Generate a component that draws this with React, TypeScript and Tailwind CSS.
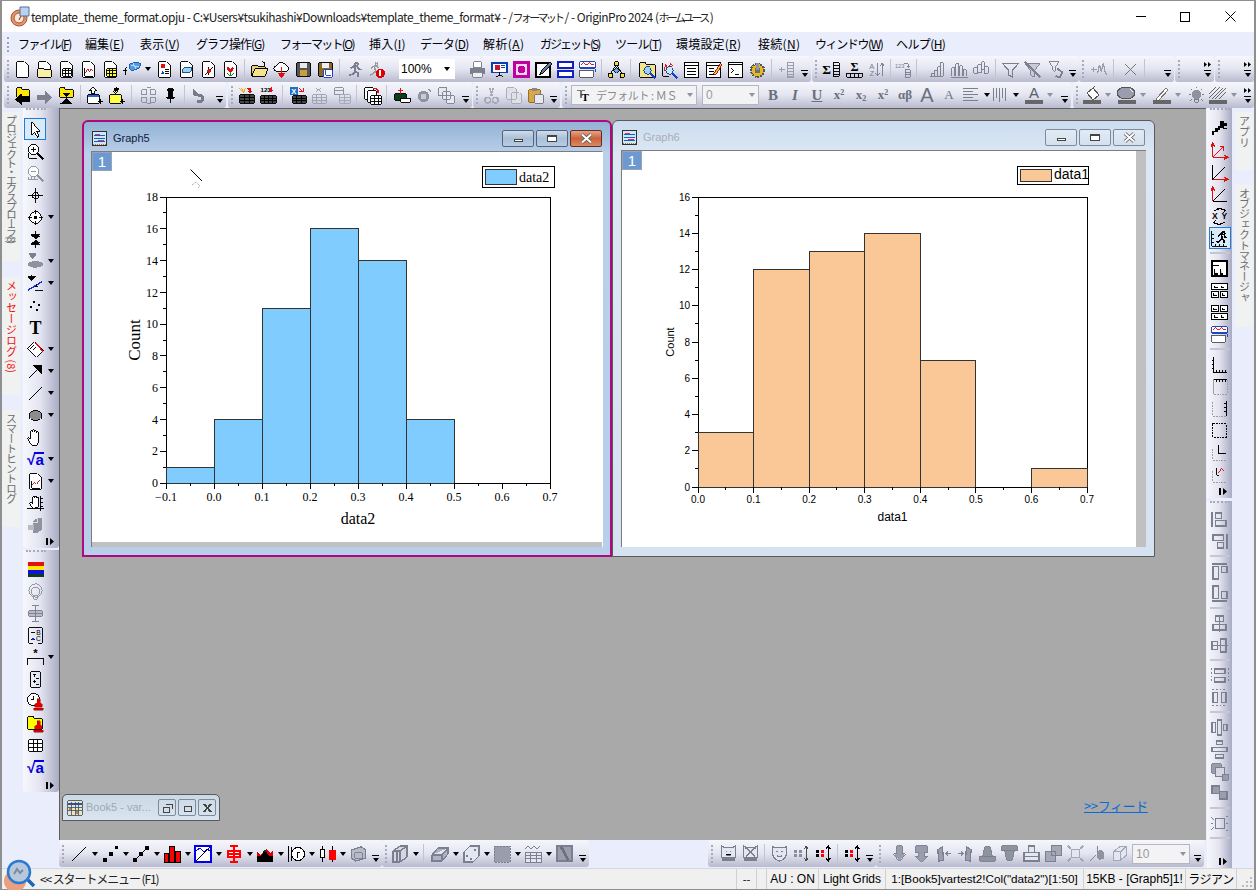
import { ReactNode } from 'react';

// 20x20 toolbar glyphs, drawn by hand from the reference
const k = '#000';
const g = '#7b7f90';
const sheet = (fill = '#fff', s = k) => <path d="M4 2h8l4 4v12H4z" fill={fill} stroke={s} />;

const icons: Record<string, ReactNode> = {
  doc: sheet(),
  wkbk: <>{sheet()}<path d="M6 9h9v8H6zM6 11.500h9M6 14h9M9 9v8M12 9v8" fill="none" stroke={k} /></>,
  book: <><path d="M1 1h18v18H1z" fill="#e8e4c8" stroke="#444" /><path d="M1 5h18" stroke="#3050a0" strokeWidth="2" /><path d="M1 9h18M1 13h18M6 3v16M10 3v16M14 3v16" stroke="#305070" /><path d="M2 10h3v3H2zM11 14h3v4h-3z" fill="#e07030" /></>,
  folderDoc: <>{sheet()}<path d="M3 9h6l1 1h7v8H3z" fill="#f9f0a8" stroke={k} /></>,
  graphDoc: <>{sheet()}<path d="M6 8v9h9" fill="none" stroke={k} /><path d="M7 14l2-5 2 4 2-4 2 3" fill="none" stroke="#d01010" /></>,
  yellowGrid: <>{sheet()}<path d="M6 9h10v8H6zM6 11.500h10M6 14h10M9 9v8M12.500 9v8" fill="#ffff30" stroke={k} /></>,
  plot3d: <><path d="M8 5l7-2 4 2-2 4-7 3-3-3z" fill="#4f9be8" stroke="#2060b0" /><path d="M9 6l8 2M11 4l3 6" stroke="#bcd8f8" /><path d="M5 8C3 8 4 12 3 16M1 11h4" fill="none" stroke={k} /></>,
  layoutDoc: <>{sheet()}<rect x="6" y="4" width="4" height="4" fill="#e01010" /><path d="M6 15l2-4 2 4z" fill="#1040d0" /><path d="M11 10h4M11 12h4M11 14h4" stroke={k} /></>,
  noteDoc: <>{sheet()}<path d="M5 13l2-5h9l-2 5z" fill="#9cd0f0" stroke="#105080" /></>,
  xyDoc: <>{sheet()}<path d="M6 16l9-9M10 7v9" stroke={k} /><circle cx="10.500" cy="11.500" r="2" fill="#e01010" /></>,
  tulipDoc: <>{sheet()}<path d="M7 7c1 1 2 1 3 2 1-1 2-1 3-2 1 3 0 5-3 6-3-1-4-3-3-6z" fill="#e01010" /><path d="M10 13v3M7 14c1 2 2 2 3 2s2 0 3-2" fill="none" stroke="#108030" /></>,
  openFolder: <><path d="M2 6h6l1 1h7v2H5l-3 8z" fill="#e8d070" stroke={k} /><path d="M5 9h14l-3 8H2z" fill="#f4e48c" stroke={k} /><path d="M13 2l3 1-1 3" fill="none" stroke={k} /></>,
  cloud: <><path d="M5 12a3 3 0 0 1 0-6 5 5 0 0 1 9-1 4 4 0 0 1 2 7z" fill="#fff" stroke={k} /><path d="M10 7v8" stroke="#e01010" strokeWidth="2" /><path d="M6 14h8l-4 5z" fill="#e01010" /></>,
  save: <><path d="M3 3h14v14H3z" fill="#555" stroke={k} /><path d="M6 3h8v5H6z" fill="#e8e8e8" /><path d="M6 11h8v6H6z" fill="#c9a040" /></>,
  saveGraph: <><path d="M3 3h14v14H3z" fill="#8a6a20" stroke={k} /><path d="M6 3h8v5H6z" fill="#eee" /><path d="M8 10h9v8H8z" fill="#fff" stroke="#2040d0" /><path d="M10 11v5h6" fill="none" stroke="#2040d0" /></>,
  runner: <path d="M12 3a1.500 1.500 0 1 0 .1 0M6 9l4-3 3 1 2 3h3M10 7l1 5-3 3-4 1M11 12l3 2 0 4" fill="none" stroke={g} strokeWidth="2" />,
  runnerStop: <><path d="M10 3a1.300 1.300 0 1 0 .1 0M4 9l4-3 3 1 1 2M8 7l1 5-3 3-3 1M9 12l2 3" fill="none" stroke="#9a9a9a" strokeWidth="1.500" /><circle cx="14" cy="14" r="5" fill="#e00000" /><path d="M13 11h2v6h-2z" fill="#fff" /></>,
  printer: <><path d="M6 2h8v6H6z" fill="#fff" stroke={g} /><path d="M2 8h16v7H2z" fill={g} /><path d="M5 13h10v5H5z" fill="#eee" stroke={g} /></>,
  present: <><path d="M2 3h16v10H2z" fill="#fff" stroke="#0840b0" strokeWidth="1.500" /><circle cx="8" cy="8" r="3" fill="#d01030" /><path d="M12 6h4M12 8h4" stroke="#0840b0" /><path d="M10 13v4M6 18l4-2 4 2" stroke={k} fill="none" /></>,
  magentaBox: <><path d="M1 1h18v18H1z" fill="#c000a0" /><path d="M4 4h12v12H4z" fill="#f4d8f0" /><circle cx="10" cy="10" r="4" fill="#c000a0" /></>,
  pen: <><path d="M2 3h15v15H2z" fill="#fff" stroke={k} strokeWidth="1.500" /><path d="M6 16l2-5 9-9 2 2-9 9z" fill="#5f7a9a" stroke={k} /></>,
  bars: <path d="M2 2h16v6H2zM2 12h16v6H2z" fill="#fff" stroke="#1020c0" strokeWidth="2" />,
  redWave: <><path d="M2 2h16v6H2z" fill="#fff" stroke="#1040c0" /><path d="M3 5l3-2 3 2 3-2 3 2 2-1" fill="none" stroke="#e01010" /><path d="M2 11h14v7H2z" fill="#fff" stroke="#555" /><path d="M2 9h16v4" fill="none" stroke="#1040c0" /></>,
  tree: <><path d="M10 5L4 14M10 5l6 9" stroke={k} /><path d="M8 2h4v4H8zM2 14h4v4H2zM14 14h4v4h-4z" fill="#f4e040" stroke={k} /><path d="M10 8l3 3-3 3-3-3z" fill="#60a8e8" stroke={k} /></>,
  findFolder: <><path d="M2 3h6l1 2h9v13H2z" fill="#f4e48c" stroke={k} /><circle cx="10" cy="11" r="4" fill="#9fd0f8" stroke="#104080" /><path d="M13 14l5 5" stroke="#1040d0" strokeWidth="2" /></>,
  findGraph: <><path d="M3 3v14h6" fill="none" stroke={k} /><path d="M4 12l2-8 2 6 3-6 3 3" fill="none" stroke="#e01010" /><circle cx="10" cy="11" r="4" fill="#cfe6fa" stroke="#104080" /><path d="M13 14l5 5" stroke="#1040d0" strokeWidth="2" /></>,
  table: <path d="M3 3h14v15H3zM3 3h14v3H3zM5 9h10M5 12h10M5 15h10" fill="#fff" stroke={k} strokeWidth="1.200" />,
  noteEdit: <><path d="M3 3h14v15H3zM3 3h14v3H3zM5 9h6M5 12h6M5 15h6" fill="#fff" stroke={k} strokeWidth="1.200" /><path d="M10 15L17 4l2 1-7 11z" fill="#f0c040" stroke="#a01010" /></>,
  cmd: <><path d="M3 3h14v15H3zM3 3h14v2H3z" fill="#fff" stroke={k} strokeWidth="1.200" /><path d="M5 8l3 3-3 3M9 15h5" fill="none" stroke={k} /></>,
  gear: <><circle cx="10" cy="11" r="7" fill="#e8b820" stroke="#555" strokeDasharray="2 1" strokeWidth="2" /><circle cx="10" cy="11" r="3" fill="#68707c" /><path d="M8 3h4v7H8z" fill="#9098a8" /></>,
  addCol: <path d="M2 10h6M5 7v6M11 3h6v15h-6zM11 6h6M11 9h6M11 12h6M11 15h6" fill="none" stroke="#9a9eac" strokeWidth="1.300" />,
  sigmaList: <><text x="6" y="15" fontSize="14" fontWeight="700" textAnchor="middle" fontFamily="Liberation Serif">Σ</text><path d="M13 3h6v14h-6zM13 6h6M13 9h6M13 12h6M13 15h6" fill="none" stroke={k} /></>,
  sigmaGrid: <><text x="10" y="12" fontSize="13" fontWeight="700" textAnchor="middle" fontFamily="Liberation Serif">Σ</text><path d="M2 14h16v4H2zM6 14v4M10 14v4M14 14v4" fill="none" stroke={k} /></>,
  sortAZ: <><text x="5" y="9" fontSize="8" fill={g} textAnchor="middle" fontFamily="Liberation Sans">A</text><text x="5" y="17" fontSize="8" fill={g} textAnchor="middle" fontFamily="Liberation Sans">Z</text><path d="M11 3v14M9 14l2 3 2-3M16 17V3M14 6l2-3 2 3" fill="none" stroke={g} /></>,
  num123: <><text x="7" y="8" fontSize="6" fill={g} textAnchor="middle" fontFamily="Liberation Sans">123</text><path d="M13 10h5v8h-5zM13 13h5M13 15.500h5M12 4h4v3M14.500 6l1.500 2 1.500-2" fill="none" stroke={g} /></>,
  stair: <path d="M2 17h2v-3h3v3h0v-6h3v6h0V7h3v10h0V3h3v14H2z" fill="none" stroke={g} />,
  column: <path d="M2 17V8h3v9M6 17V4h3v13M10 17V6h3v11M14 17v-7h3v7M1 18h18" fill="none" stroke={g} />,
  wave: <path d="M2 8h4v6H2zM6 5h4v8H6zM10 2h3v8h-3zM13 7h4v7h-4z" fill="none" stroke={g} />,
  filter: <path d="M2 4h16l-6 7v7l-4-2v-5z" fill="none" stroke={g} strokeWidth="1.300" />,
  filterX: <><path d="M2 4h16l-6 7v7l-4-2v-5z" fill="#c8cad6" stroke={g} /><path d="M2 2l16 16" stroke={g} strokeWidth="2.500" /></>,
  filterUp: <><path d="M4 2h11l-4 5v5l-3-1V7z" fill="none" stroke={g} /><path d="M13 9l5 4-2 5-5-1" fill="none" stroke={g} strokeWidth="2" /></>,
  peak: <path d="M1 10h6M4 7v6M8 14l2-9 2 7 2-9 2 10 2 2" fill="none" stroke="#9a9eac" strokeWidth="1.300" />,
  cross: <path d="M4 4l12 12M16 4L4 16" stroke="#777" strokeWidth="1.400" />,
  folderBack: <><path d="M4 2h5l1 2h7v8H4z" fill="#ffe800" stroke={k} /><path d="M2 14l7-6v3h9v6H9v3z" fill={k} /></>,
  fwd: <path d="M2 9h9V5l7 7-7 7v-4H2z" fill="#7f8190" />,
  folderDown: <><path d="M3 2h5l1 2h8v8H3z" fill="#ffe800" stroke={k} /><path d="M5 7h10l-5 5zM3 19l7-6 7 6z" fill={k} /></>,
  winAdd: <><path d="M7 1l4 4H9v3H6V5H3zM2 9h12v9H2z" fill="#fff" stroke={k} /><path d="M2 9h12v3H2z" fill="#3060e0" /><path d="M15 14v5M12.500 16.500h5" stroke={k} strokeWidth="1.500" /></>,
  folderAdd: <><path d="M9 1l2 3-3 4-2-2zM2 9h12v9H2z" fill="#ffff40" stroke={k} /><path d="M6 2h6l-4 5z" fill={k} /><path d="M15 14v5M12.500 16.500h5" stroke={k} strokeWidth="1.500" /></>,
  sync: <path d="M3 4h5v5H3zM12 4h5v5h-5zM3 12h5v5H3zM12 12h5v5h-5zM8 2h5M8 18h5" fill="none" stroke="#8a8e9c" />,
  pin: <path d="M7 3h6v2l-1 1v6h2v1H6v-1h2V6L7 5zM10 13v5" fill={k} stroke={k} />,
  undo: <path d="M3 9V3l6 5H6c5 0 9 1 9 5s-3 5-6 5h-2v-3h2c2 0 3-.5 3-2s-2-2-4-2H5z" fill="#777a88" />,
  wand: <><path d="M2 2l5 5M5 2l2 5M9 2l-2 5" stroke="#f0b000" /><path d="M11 2h5v3h2l-3 3-3-3h2" fill="#e01010" transform="translate(-1 0)" /><path d="M3 9h15v9H3zM3 12h15M3 15h15M8 9v9M13 9v9" fill="#444" stroke={k} /></>,
  num123red: <><text x="7" y="6" fontSize="6.500" fontWeight="700" textAnchor="middle" fontFamily="Liberation Sans">123</text><path d="M14 1v3h2l-3 3-3-3h2V2" fill="#e01010" /><path d="M2 10h16v8H2zM2 13h16M2 15.500h16M6 10v8M10 10v8M14 10v8" fill="#444" stroke={k} /></>,
  excel: <><path d="M2 1h8v8H2z" fill="#2070c0" /><text x="6" y="8" fontSize="8" fontWeight="700" fill="#fff" textAnchor="middle" fontFamily="Liberation Sans">X</text><path d="M12 3l4 3M16 2v4h-4" fill="none" stroke="#e01010" /><path d="M5 10h14v8H5zM5 13h14M5 15.500h14M9 10v8M14 10v8" fill="#444" stroke={k} /></>,
  gridDim: <><path d="M6 2l3 2-3 2M12 2l-3 2 3 2" fill="none" stroke="#9ea2b0" /><path d="M3 9h14v9H3zM3 12h14M3 15h14M7 9v9M12 9v9" fill="none" stroke="#9ea2b0" /></>,
  gridDim2: <><path d="M2 2h9v7H2zM2 5h9" fill="none" stroke="#8a8e9c" /><path d="M7 9h11v9H7zM7 12h11M7 15h11M12 9v9" fill="none" stroke="#a4a8b6" /></>,
  pages: <><path d="M2 2h9v12H2z" fill="#fff" stroke={k} /><path d="M5 5h9v12H5z" fill="#fff" stroke={k} /><path d="M8 10h11v9H8zM8 13h11M8 16h11M12 10v9M16 10v9" fill="#fff" stroke={k} /><path d="M11 3c3-1 5 1 5 4" fill="none" stroke="#e01010" strokeWidth="1.500" /></>,
  dataIn: <><path d="M2 8h12v7H2z" fill="#0a3c1e" stroke={k} /><path d="M8 2v6M5 5h6" stroke="#e01010" strokeWidth="1.500" /><path d="M8 13h10v4H8z" fill="#fff" stroke={k} /></>,
  round: <><circle cx="9" cy="11" r="6" fill="#8f93a0" /><circle cx="9" cy="11" r="3" fill="#c8cad6" /><path d="M14 3l3 3" stroke="#8f93a0" strokeWidth="2" /></>,
  copies: <path d="M2 2h8v8H2zM6 6h8v8H6zM10 10h8v8h-8z" fill="#e8e9f0" stroke="#7f8392" />,
  scissors: <><path d="M8 2l3 9M12 2l-3 9" stroke="#aaaab4" strokeWidth="1.500" /><circle cx="6" cy="15" r="3" fill="none" stroke="#aaaab4" strokeWidth="1.500" /><circle cx="14" cy="15" r="3" fill="none" stroke="#aaaab4" strokeWidth="1.500" /></>,
  copy: <path d="M3 2h8l2 2v10H3zM8 7h8l2 2v9H8z" fill="#dfe0e8" stroke="#aaaab4" />,
  paste: <><path d="M3 4h12v13H3z" fill="#d8a848" stroke="#8a6a20" /><path d="M6 2h6v3H6z" fill="#888" /><path d="M9 9h9v9H9z" fill="#e8e8f0" stroke="#777" /></>,
  ttFont: <><path d="M2 4h10M7 4v9" fill="none" stroke="#777" strokeWidth="2" /><text x="12" y="17" fontSize="13" fontWeight="700" textAnchor="middle" fontFamily="Liberation Serif">T</text></>,
  alignLeft: <path d="M2 3h15M2 6h10M2 9h15M2 12h10M2 15h15" stroke={g} />,
  colBars: <path d="M3 3v13M6 3v10M9 3v14M12 3v10M15 3v13" stroke={g} />,
  fontColor: <><text x="10" y="13" fontSize="15" fill="#5a5d6a" textAnchor="middle" fontFamily="Liberation Sans">A</text><path d="M1 15h18v4H1z" fill="#666" /></>,
  bucket: <><path d="M5 8l6-5 6 7-6 5z" fill="#fff" stroke="#555" /><path d="M11 3l2-2" stroke="#555" /><path d="M1 15h18v4H1z" fill="#666" /></>,
  palette: <><ellipse cx="9" cy="8" rx="9" ry="6" fill="#9a9eac" stroke="#555" /><path d="M13 4l3 3" stroke="#fff" /><path d="M1 15h18v4H1z" fill="#666" /></>,
  pencilLine: <><path d="M5 13L14 3l2 2-9 10H4z" fill="#fff" stroke="#777" /><path d="M1 15h18v4H1z" fill="#666" /></>,
  bulb: <><circle cx="10" cy="9" r="5" fill="#8f93a0" /><path d="M8 14h4v3H8zM10 1v1M2 9h2M16 9h2M4 3l1 1M16 3l-1 1M3 16l2-2M17 16l-2-2" stroke="#777" fill="none" /></>,
  hatch: <><path d="M1 13L12 2M4 14L15 3M7 14L18 3M1 9l7-7M11 14l7-7" stroke="#666" /><path d="M1 15h18v4H1z" fill="#666" /></>,
  arrowSel: <path d="M6 2v14l3-3 3 5 2-1-3-5h4z" fill="#fff" stroke={k} />,
  zoomIn: <><circle cx="8" cy="8" r="5.500" fill="#fff" stroke={k} /><path d="M5 8h6M8 5v6" stroke={k} /><path d="M12 12l6 6" stroke={k} strokeWidth="2.500" /><path d="M3 12v5h9" fill="none" stroke={k} /></>,
  zoomOut: <><circle cx="8" cy="8" r="5.500" fill="#fff" stroke="#8f93a0" /><path d="M5 8h6" stroke="#8f93a0" /><path d="M12 12l6 6" stroke="#8f93a0" strokeWidth="2.500" /><path d="M2 16h11M3 14v2M6 14v2M9 14v2" fill="none" stroke="#8f93a0" /></>,
  crosshair: <><circle cx="10" cy="10" r="3" fill="none" stroke={k} /><path d="M10 2v16M2 10h16" stroke={k} /></>,
  target: <><circle cx="10" cy="10" r="6" fill="#fff" stroke={k} /><circle cx="10" cy="10" r="1.500" fill={k} /><path d="M10 2v4M10 14v4M2 10h4M14 10h4" stroke={k} /></>,
  pickY: <path d="M5 5h10l-5 4zM10 1v4M5 15h10l-5-4zM10 19v-4" fill={k} stroke={k} />,
  peakPick: <><path d="M3 2h8L7 7zM7 1v4" fill={g} stroke={g} /><ellipse cx="10" cy="13" rx="8" ry="3.500" fill="#8f93a0" /></>,
  fitPick: <><path d="M2 3h8L6 7zM6 1v4" fill={k} stroke={k} /><path d="M2 17L17 8" stroke="#1030d0" strokeWidth="1.500" /><path d="M11 11v3M9 13h4M9 17h9" stroke={k} /></>,
  dots: <path d="M7 5h2v2H7zM13 8h2v2h-2zM4 11h2v2H4zM11 14h2v2h-2zM10 9h1v1h-1z" fill={k} />,
  textT: <text x="10" y="17" fontSize="19" fontWeight="700" textAnchor="middle" fontFamily="Liberation Serif">T</text>,
  rotText: <><path d="M2 9l7-7 9 9-7 7z" fill="#fff" stroke={k} /><path d="M5 9l4-4M7 11l4-4" stroke={k} /><path d="M10 3l8 9" stroke="#e01010" strokeWidth="1.500" /></>,
  arrowLine: <path d="M3 17L14 6M9 4h7v7z" fill={k} stroke={k} strokeWidth="1.300" />,
  line: <path d="M3 17L17 3" stroke={k} strokeWidth="1.300" />,
  ellipse: <ellipse cx="10" cy="10" rx="6.500" ry="5.500" fill="#8c8c8c" stroke={k} />,
  hand: <path d="M6 18c-2-3-4-6-4-7s2-1 3 1V4c0-2 2-2 2 0V3c0-2 2-2 2 0v1c0-2 2-2 2 0v1c0-2 2-1 2 0v9l-1 4z" fill="#fff" stroke={k} />,
  sqrt: <><text x="10" y="16" fontSize="16" fontWeight="700" fill="#0000e0" textAnchor="middle" fontFamily="Liberation Sans">√a</text><path d="M8 3h11" stroke="#0000e0" strokeWidth="2" /></>,
  chartDoc: <>{sheet()}<path d="M6 9v8h9" fill="none" stroke={k} /><path d="M6 14l3-3 2 2 4-5" fill="none" stroke="#e01010" /></>,
  handAxis: <><path d="M8 15c-2-2-4-4-4-5s2-1 3 0V4c0-2 2-2 2 0V3c0-1 2-1 2 0v1c0-1 2-1 2 0v10z" fill="#fff" stroke={k} /><path d="M1 15h18M15 2v16M15 5h3M15 9h3M15 13h3" stroke={k} /></>,
  box3d: <><path d="M7 6l5-4h5v12l-5 4H7z" fill="#8f93a0" /><path d="M2 9h6v6H2z" fill="#b8bac8" /><path d="M12 2v5H7" fill="none" stroke="#ddd" /></>,
  circles: <><circle cx="10" cy="9" r="7" fill="none" stroke="#8f93a0" /><circle cx="10" cy="10" r="4.500" fill="none" stroke="#8f93a0" /><path d="M8 14v4h4v-4" fill="none" stroke="#8f93a0" /></>,
  boxPlot: <path d="M10 2v16M6 2h8M6 18h8M3 7h14v6H3zM3 10h14" fill="#b8bac8" stroke="#7b7f90" />,
  bcLegend: <><path d="M3 2v16M17 2v16M3 2h14M3 18h4M13 18h4" fill="none" stroke={k} /><text x="13" y="9" fontSize="7" textAnchor="middle" fontFamily="Liberation Sans">B</text><text x="13" y="16" fontSize="7" textAnchor="middle" fontFamily="Liberation Sans">C</text><path d="M5 7h4M5 14h4" stroke={k} /><circle cx="7" cy="14" r="1.200" fill="#1030d0" /></>,
  asterisk: <><text x="10" y="9" fontSize="12" fontWeight="700" textAnchor="middle" fontFamily="Liberation Sans">*</text><path d="M2 18v-7h16v7" fill="none" stroke={k} /></>,
  ruler: <path d="M5 2h10v16H5zM7 5h3M8.500 4v3M11 9h3M7 12h3M8.500 11v3M11 15h3" fill="none" stroke={k} />,
  clockStamp: <><circle cx="8" cy="8" r="6.500" fill="#fff" stroke={k} /><path d="M8 4v4h-3" fill="none" stroke={k} /><path d="M12 7h3v4l2 2v3H9v-3l3-2zM8 17h10v2H8z" fill="#e00000" stroke="#800" strokeWidth=".5" /></>,
  folderStamp: <><path d="M2 3h6l1 2h8v11H2z" fill="#ffff00" stroke={k} /><path d="M12 7h3v4l2 2v3H9v-3l3-2zM8 17h10v2H8z" fill="#e00000" stroke="#800" strokeWidth=".5" /></>,
  plainGrid: <path d="M3 4h14v12H3zM3 8h14M3 12h14M7.500 4v12M12.500 4v12" fill="#fff" stroke={k} />,
  checker: <path d="M11 2h4v2h3v3h-3v2h3v2h-4V9h-3v3h-3v2H4v3H2v-4h3V9h3V7h3z" fill={k} />,
  xyzRed: <><path d="M3 17V3M1 6l2-4 2 4M3 17h15M15 15l4 2-4 2" fill="none" stroke="#e01010" strokeWidth="1.300" /><path d="M3 17L14 6M10 6h4v4" fill="none" stroke="#e01010" strokeWidth="1.300" /></>,
  xyRed: <><path d="M3 2v15L16 4" fill="none" stroke={k} strokeWidth="1.300" /><path d="M3 17h15M15 15l4 2-4 2" fill="none" stroke="#e01010" strokeWidth="1.300" /></>,
  yxRed: <><path d="M3 17h15M3 17L16 4" fill="none" stroke={k} strokeWidth="1.300" /><path d="M3 17V3M1 6l2-4 2 4" fill="none" stroke="#e01010" strokeWidth="1.300" /></>,
  swapXY: <><path d="M5 4c3-3 8-3 11 0M15 16c-3 3-8 3-11 0M14 2l2 2-2 2M6 18l-2-2 2-2" fill="none" stroke={k} strokeWidth="1.300" /><text x="5" y="13" fontSize="9" fontWeight="700" textAnchor="middle" fontFamily="Liberation Sans">X</text><text x="15" y="13" fontSize="9" fontWeight="700" textAnchor="middle" fontFamily="Liberation Sans">Y</text></>,
  runAxis: <><path d="M2 2v16h16M2 6h2M2 10h2M2 14h2M6 16v2M10 16v2M14 16v2" fill="none" stroke={k} /><path d="M14 3a1.500 1.500 0 1 0 .1 0M8 8l4-3 3 1 1 3h2M12 6l1 4-3 3-3 1M13 10l2 2v3" fill="none" stroke={k} strokeWidth="1.700" /></>,
  layerBig: <path d="M2 2h16v16H2zM2 7h7M5 11v5h3M11 11v5h3" fill="#fff" stroke={k} strokeWidth="1.500" />,
  layerTop: <path d="M2 3h16v6H2zM2 11h7v6H2zM11 11h7v6h-7zM5 5v2h3M12 5v2h3M4 13v2h3M13 13v2h3" fill="#fff" stroke={k} strokeWidth="1.200" />,
  layerBot: <path d="M2 11h16v6H2zM2 3h7v6H2zM11 3h7v6h-7zM5 13v2h3M12 13v2h3M4 5v2h3M13 5v2h3" fill="#fff" stroke={k} strokeWidth="1.200" />,
  axisB: <path d="M4 2v16h14M4 18v-2M7 18v-2M10 18v-2M13 18v-2M16 18v-2M2 6h2M2 10h2M2 14h2" fill="none" stroke={k} strokeWidth="1.200" />,
  axisT: <><path d="M4 18V2" fill="none" stroke="#9a9a9a" /><path d="M4 3h14M7 3v2M10 3v2M13 3v2M16 3v2" stroke={k} strokeWidth="1.200" /><path d="M4 18h14M18 3v15" fill="none" stroke="#9a9a9a" strokeDasharray="2 1" /></>,
  axisR: <><path d="M3 3v15h14" fill="none" stroke="#9a9a9a" strokeDasharray="2 1" /><path d="M17 2v16M15 5h2M15 9h2M15 13h2" stroke={k} strokeWidth="1.200" /></>,
  axisBox: <path d="M3 3h14v14H3z" fill="none" stroke={k} strokeDasharray="2 1" strokeWidth="1.200" />,
  axisBreak: <><path d="M9 2v9h8" fill="none" stroke={k} strokeWidth="1.200" /><path d="M3 6v12h14" fill="none" stroke="#9a9a9a" strokeDasharray="2 1" /></>,
  axisRed: <><path d="M3 6v12h14" fill="none" stroke="#9a9a9a" strokeDasharray="2 1" /><path d="M7 3v8h2" fill="none" stroke={k} /><path d="M9 8l3-4 3 3" fill="none" stroke="#e01010" /></>,
  alnL: <path d="M2 2v16M6 3h6v6H6zM6 11h11v6H6z" fill="none" stroke={g} strokeWidth="1.500" />,
  alnR: <path d="M18 2v16M3 3h11v6H3zM8 11h6v6H8z" fill="none" stroke={g} strokeWidth="1.500" />,
  alnT: <path d="M2 2h16M3 5h6v13H3zM12 5h6v6h-6z" fill="none" stroke={g} strokeWidth="1.500" />,
  alnB: <path d="M2 18h16M3 2h6v13H3zM12 8h6v7h-6z" fill="none" stroke={g} strokeWidth="1.500" />,
  ctrH: <path d="M6 2h8v6H6zM3 11h14v6H3zM10 1v18" fill="none" stroke={g} strokeWidth="1.500" />,
  ctrV: <path d="M2 6h6v8H2zM11 3h6v14h-6zM1 10h18" fill="none" stroke={g} strokeWidth="1.500" />,
  sameW: <><path d="M5 3h11v5H5zM5 12h11v5H5z" fill="none" stroke={g} strokeWidth="1.500" /><path d="M2 2v16M19 2v16" stroke={g} strokeDasharray="2 2" /></>,
  sameH: <><path d="M3 5h5v10H3zM12 5h5v10h-5z" fill="none" stroke={g} strokeWidth="1.500" /><path d="M2 2h16M2 18h16" stroke={g} strokeDasharray="2 2" /></>,
  dist: <path d="M2 5h4v10H2zM8 2h4v16H8zM14 7h4v6h-4z" fill="none" stroke={g} strokeWidth="1.500" />,
  distV: <path d="M7 1h6v4H7zM2 8h16v4H2zM6 15h8v4H6z" fill="none" stroke={g} strokeWidth="1.500" />,
  overlap: <><path d="M2 2h10v10H2z" fill="#9a9eac" stroke={g} /><path d="M6 6h9v9H6z" fill="#d4d6e2" stroke={g} strokeWidth="1.500" /><path d="M13 13h6v6h-6z" fill="#9a9eac" stroke={g} /></>,
  overlap2: <path d="M2 2h8v8H2zM10 8h8v8h-8z" fill="#9a9eac" stroke={g} strokeWidth="1.500" />,
  selBox: <><path d="M6 5h9v10H6z" fill="none" stroke={g} strokeWidth="1.500" /><path d="M1 3l3 3M1 10h2M1 17l3-3M17 3h2M17 10h2M17 17h2" stroke={g} /></>,
  lineB: <path d="M3 17L17 3" stroke={k} />,
  scatter: <path d="M3 14h4v4H3zM9 8h4v4H9zM15 2h3v3h-3z" fill={k} />,
  lineSym: <><path d="M3 17L17 3" stroke={k} strokeWidth="1.300" /><path d="M2 14h4v4H2zM8 8h4v4H8zM14 2h4v4h-4z" fill={k} /></>,
  redCols: <path d="M2 9h4v9H2zM7 2h5v16H7zM13 7h5v11h-5z" fill="#ff0000" stroke={k} />,
  bluePlot: <><path d="M2 2h16v16H2z" fill="#fff" stroke="#0000f0" strokeWidth="1.500" /><path d="M3 7l4-3 4 4 3-3 3 2" fill="none" stroke="#0000f0" /><path d="M3 17L17 3" stroke={k} /></>,
  redBox: <path d="M10 2v16M6 2h8M6 18h8M4 7h12v6H4zM4 10h12" fill="#fff" stroke="#ff0000" strokeWidth="1.300" />,
  area: <><path d="M2 8l4 3 5-6 4 4 3-2v11H2z" fill="#e00000" /><path d="M2 12l4 0 4-6 4 6 4 0v6H2z" fill={k} /><path d="M8 8l2-3 2 3z" fill="#0a3c1e" /></>,
  polarR: <><path d="M2 2v16M5 3v14" stroke={k} /><circle cx="12" cy="10" r="6.500" fill="#fff" stroke={k} /><path d="M11 14V8h3" fill="none" stroke={k} /></>,
  candle: <><path d="M5 2v16M15 2v16" stroke={k} /><path d="M3 5h4v8H3z" fill="#fff" stroke={k} /><path d="M12 6h6v9h-6z" fill="#ff0000" stroke="#ff0000" /></>,
  cubeDim: <><path d="M3 6l10-3 4 3v9l-10 3-4-3z" fill="#b8bac8" stroke="#7b7f90" strokeWidth="1.300" /><path d="M6 9h8v6H6z" fill="none" stroke="#7b7f90" /></>,
  wall3d: <path d="M3 7l7-5h7v11l-7 5H3zM3 7h7v11M10 7l7-5M7 7v11" fill="#d4d6e2" stroke="#7b7f90" strokeWidth="1.200" />,
  block3d: <path d="M2 11l6-7h10v6l-6 7H2zM2 11h10l6-7M12 11v6" fill="#b0b3c4" stroke="#7b7f90" strokeWidth="1.200" />,
  dice: <><path d="M3 8l6-6h9v10l-6 6H3z" fill="#e4e6f0" stroke="#7b7f90" strokeWidth="1.200" /><path d="M5 11h2v2H5zM9 14h2v2H9zM13 5h2v2h-2z" fill="#7b7f90" /></>,
  dotted: <path d="M2 2h16v16H2z" fill="#9a9eac" stroke="#7b7f90" strokeDasharray="2 1" />,
  waveGrid: <><path d="M2 5l3-3 3 3 3-3 3 3 3-3" fill="none" stroke="#7b7f90" /><path d="M2 8h16v10H2zM2 11h16M2 14.500h16M7 8v10M13 8v10" fill="#e4e6f0" stroke="#7b7f90" /></>,
  imgBox: <><path d="M2 2h16v16H2z" fill="#9a9eac" stroke="#7b7f90" strokeWidth="1.500" /><path d="M6 3c4 4 4 8 8 14" stroke="#6e7280" strokeWidth="3" fill="none" /></>,
  mask: <><path d="M3 2l3 2h8l3-2v12H3z" fill="#e4e6f0" stroke="#7b7f90" strokeWidth="1.200" /><path d="M7 8h1M12 8h1M7 11c2 2 4 2 6 0" stroke="#7b7f90" /><path d="M3 15h14v3H3z" fill="#7b7f90" /></>,
  maskX: <><path d="M3 2l3 2h8l3-2v12H3z" fill="#e4e6f0" stroke="#7b7f90" strokeWidth="1.200" /><path d="M5 4l10 9M15 4L5 13" stroke="#7b7f90" strokeWidth="1.500" /><path d="M3 15h14v3H3z" fill="#7b7f90" /></>,
  maskPlain: <path d="M3 3c4 1 10 1 14 0v8c0 4-4 6-7 7-3-1-7-3-7-7zM6 8h2M12 8h2M7 12c2 2 4 2 6 0" fill="#e4e6f0" stroke="#7b7f90" strokeWidth="1.300" />,
  ptsV: <><path d="M2 6h3v3H2zM7 6h3v3H7zM2 11h3v3H2zM7 11h3v3H7z" fill="#8a8e9c" /><path d="M15 2v16M13 5l2-3 2 3M13 15l2 3 2-3" fill="none" stroke="#444" /></>,
  ptsRed: <><path d="M2 6h3v3H2zM2 11h3v3H2z" fill={k} /><path d="M7 6h3v3H7zM7 11h3v3H7z" fill="#ff0000" /><path d="M15 2v16M13 5l2-3 2 3M13 15l2 3 2-3" fill="none" stroke={k} strokeWidth="1.300" /></>,
  moveDn: <path d="M7 2h6v8h3l-6 8-6-8h3z" fill="#9a9eac" stroke={g} />,
  moveUp: <path d="M4 2h12v7h-3v4h3l-6 6-6-6h3V9H4z" fill="#9a9eac" stroke={g} />,
  moveL: <path d="M4 6l5-3 1 14-5 1zM18 10h-6M15 7l-3 3 3 3" fill="#9a9eac" stroke={g} strokeWidth="1.300" />,
  moveR: <path d="M16 6l-5-3-1 14 5 1zM2 10h6M5 7l3 3-3 3" fill="#9a9eac" stroke={g} strokeWidth="1.300" />,
  trap: <path d="M7 3h6l2 10H5zM2 13h16v5H2z" fill="#8f93a0" stroke={g} />,
  trapDn: <path d="M2 2h16v5H2zM5 7h10l-2 10H7z" fill="#8f93a0" stroke={g} />,
  trapOut: <path d="M7 2h6v7H7zM2 9h16v9H2zM2 13h16" fill="#e4e6f0" stroke={g} strokeWidth="1.300" />,
  cubes: <path d="M2 8h10v10H2zM8 2h10v10H8z" fill="#a4a8b6" stroke={g} strokeWidth="1.200" />,
  fourArrows: <><path d="M6 6h8v8H6z" fill="#e4e6f0" stroke="#a4a8b6" strokeWidth="1.500" /><path d="M2 2l3 3M18 2l-3 3M2 18l3-3M18 18l-3-3" stroke="#a4a8b6" strokeWidth="2" /></>,
  pinCube: <><path d="M9 8l5-2 3 3v6l-5 2-3-3z" fill="#8f93a0" /><path d="M2 18l6-6M10 2v6" stroke={g} /></>,
  cubeLine: <path d="M4 8l6-5h7v9l-6 5H4zM4 8h7v9M11 8l6-5" fill="#e4e6f0" stroke="#a4a8b6" strokeWidth="1.300" />,
};

const cjk = '[font-family:"Noto_Sans_CJK_JP","Noto_Sans",sans-serif]';

function Icon({ i, size = 20 }: { i: string; size?: number }) {
  return (
    <svg width={size} height={size} viewBox="0 0 20 20" shapeRendering="crispEdges" className="shrink-0">
      {icons[i]}
    </svg>
  );
}

function Arrow({ dim }: { dim?: boolean }) {
  return <span className={`h-0 w-0 shrink-0 border-x-[3.5px] border-t-[4px] border-x-transparent ${dim ? 'border-t-[#8f92a2]' : 'border-t-black'}`} />;
}

// plain toolbar button, 22px wide, or 32px with a drop arrow
function B({ i, a, dim, w, cls = '' }: { i: string; a?: boolean; dim?: boolean; w?: string; cls?: string }) {
  return (
    <div className={`flex h-full shrink-0 items-center ${a ? `${w ?? 'w-[32px]'} gap-[3px] pl-[1px]` : `${w ?? 'w-[22px]'} justify-center`} ${cls}`}>
      <Icon i={i} size={a ? 20 : 19} />
      {a && <Arrow dim={dim} />}
    </div>
  );
}

function Sep() {
  return <div className="mx-[3px] h-[20px] w-[1px] shrink-0 bg-[#c2c4d2]" />;
}

function Grip() {
  return <div className="ml-[3px] mr-[2px] h-[18px] w-[2px] shrink-0 border-l-2 border-dotted border-[#a8aabb]" />;
}

function Chevron({ more }: { more?: boolean }) {
  return (
    <div className="ml-auto flex h-full w-[13px] shrink-0 flex-col items-center justify-end gap-[2px] pb-[5px]">
      {more && (
        <svg width="8" height="5" viewBox="0 0 8 5" className="mb-auto mt-[6px]"><path d="M0 0l3 2.500L0 5zM4 0l3 2.500L4 5z" fill="#000" /></svg>
      )}
      <span className="h-[1px] w-[7px] bg-black" />
      <span className="h-0 w-0 border-x-[3.5px] border-t-[4px] border-x-transparent border-t-black" />
    </div>
  );
}

function SideMore() {
  return (
    <svg width="9" height="7" viewBox="0 0 9 7" className="mb-[3px] mr-[4px] mt-auto self-end">
      <path d="M0 0h2v7H0zM4 0l4 3.500L4 7z" fill="#000" />
    </svg>
  );
}

function Seg({ cls, children, more }: { cls: string; children?: ReactNode; more?: boolean }) {
  return (
    <div className={`flex h-full shrink-0 items-center rounded-[3px] bg-gradient-to-b from-[#f6f7fc] via-[#e4e5f0] to-[#b9bbcf] ${cls}`}>
      {children}
      <Chevron more={more} />
    </div>
  );
}

function Combo({ cls, children }: { cls: string; children: ReactNode }) {
  return (
    <div className={`flex h-[20px] shrink-0 items-center justify-between border border-[#b4b6c0] bg-[#f3f3f6] pl-[3px] pr-[3px] ${cls}`}>
      {children}
      <Arrow dim />
    </div>
  );
}

function MenuItem({ t, k: key, cls }: { t: string; k: string; cls: string }) {
  return (
    <span className={`shrink-0 whitespace-nowrap ${cls}`}>
      {t}(<span className="underline">{key}</span>)
    </span>
  );
}

function Graph({
  title, active, cls, page, extra,
}: { title: string; active?: boolean; cls: string; page: ReactNode; extra: string }) {
  return (
    <div className={`absolute flex flex-col rounded-t-[6px] ${cls}`}>
      <div className="flex h-[29px] shrink-0 items-center pl-[1px] pr-[1px] pt-[3px]">
        <GraphGlyph />
        <span className={`ml-[6px] text-[11px] ${active ? 'text-[#10203c]' : 'text-[#a8afb8]'} font-['Liberation_Sans',sans-serif]`}>{title}</span>
        <div className="ml-auto flex gap-[2px]">
          <WinBtn kind="min" active={active} />
          <WinBtn kind="max" active={active} />
          <WinBtn kind="close" active={active} hot={active} />
        </div>
      </div>
      <div className={`min-h-0 flex-1 border-t border-l border-[#7d7d7d] bg-white ${extra}`}>{page}</div>
    </div>
  );
}

function GraphGlyph() {
  return (
    <svg width="15" height="15" viewBox="0 0 15 15" shapeRendering="crispEdges" className="shrink-0">
      <path d="M.5.5h14v14H.5z" fill="#cfe8f8" stroke="#303030" />
      <path d="M2 4h11M2 7h11M2 10h11" stroke="#1060c0" />
      <path d="M3 3h5M6 9h6" stroke="#e03060" />
      <path d="M1 13h13" stroke="#c07020" strokeDasharray="1 1" />
    </svg>
  );
}

function WinBtn({ kind, active, hot }: { kind: 'min' | 'max' | 'close'; active?: boolean; hot?: boolean }) {
  const frame = hot
    ? 'border-[#6b2a20] bg-gradient-to-b from-[#e2a587] via-[#c9623c] to-[#d98b62]'
    : active
      ? 'border-[#55647c] bg-gradient-to-b from-[#cfdcec] via-[#a9bfd8] to-[#b9cde2]'
      : 'border-[#7f8a98] bg-gradient-to-b from-[#e2ebf5] to-[#d4e0ee]';
  return (
    <div className={`flex h-[17px] w-[32px] items-center justify-center rounded-[2px] border ${frame}`}>
      {kind === 'min' && <span className="mt-[5px] h-[3px] w-[9px] border border-[#444] bg-white" />}
      {kind === 'max' && <span className="h-[7px] w-[10px] border border-[#444] border-t-2 bg-white" />}
      {kind === 'close' && (
        <svg width="13" height="11" viewBox="0 0 13 11">
          <path d="M2 1.500l9 8M11 1.500l-9 8" stroke="#555" strokeWidth="3.500" />
          <path d="M2 1.500l9 8M11 1.500l-9 8" stroke="#fff" strokeWidth="2" />
        </svg>
      )}
    </div>
  );
}

function PageTag() {
  return (
    <div className="absolute left-0 top-0 flex h-[19px] w-[20px] items-center justify-center border border-[#9aa4b4] bg-[#6c99d0] text-[15px] leading-none text-white font-['Liberation_Sans',sans-serif]">
      1
    </div>
  );
}

type ChartProps = {
  w: number; h: number; x0: number; x1: number; yTop: number; yBot: number; yMax: number;
  xMin: number; bars: number[]; fill: string; yStep: number;
  font: string; tick: number; label: number; name: string; legendX: number; legendY: number;
  legendW: number; legendH: number; yLabelX: number; xLabelY: number; minus?: boolean;
};

function Chart(p: ChartProps) {
  const xs = (v: number) => p.x0 + ((v - p.xMin) / (0.7 - p.xMin)) * (p.x1 - p.x0);
  const ys = (v: number) => p.yBot - (v / p.yMax) * (p.yBot - p.yTop);
  const xt: number[] = [];
  for (let v = Math.round(p.xMin * 10); v <= 7; v++) xt.push(v / 10);
  const yt: number[] = [];
  for (let v = 0; v <= p.yMax; v += p.yStep) yt.push(v);
  const c = (p.x0 + p.x1) / 2;
  return (
    <svg width={p.w} height={p.h} className="block" fontFamily={p.font} shapeRendering="crispEdges">
      <rect x={p.x0} y={p.yTop} width={p.x1 - p.x0} height={p.yBot - p.yTop} fill="#fff" stroke="#000" />
      {p.bars.map((b, n) =>
        b > 0 ? (
          <rect key={n} x={xs(p.xMin + n / 10)} y={ys(b)} width={xs(0.1) - xs(0)} height={p.yBot - ys(b)} fill={p.fill} stroke="#333" />
        ) : null,
      )}
      {xt.map((v) => (
        <g key={v}>
          <path d={`M${xs(v)} ${p.yBot}v6`} stroke="#000" />
          <text x={xs(v)} y={p.yBot + 6 + p.tick} fontSize={p.tick} textAnchor="middle" shapeRendering="auto">
            {p.minus && v < 0 ? `−${Math.abs(v).toFixed(1)}` : v.toFixed(1)}
          </text>
          <path d={`M${xs(v + 0.05)} ${p.yBot}v${v < 0.65 ? 3 : 0}`} stroke="#000" />
        </g>
      ))}
      {yt.map((v) => (
        <g key={v}>
          <path d={`M${p.x0} ${ys(v)}h-6`} stroke="#000" />
          <path d={`M${p.x0} ${ys(v + p.yStep / 2)}h${v < p.yMax ? -3 : 0}`} stroke="#000" />
          <text x={p.x0 - 8} y={ys(v) + p.tick * 0.35} fontSize={p.tick} textAnchor="end" shapeRendering="auto">{v}</text>
        </g>
      ))}
      <text x={c} y={p.xLabelY} fontSize={p.label} textAnchor="middle" shapeRendering="auto">{p.name}</text>
      <text transform={`translate(${p.yLabelX} ${(p.yTop + p.yBot) / 2}) rotate(-90)`} fontSize={p.label + (p.label > 12 ? 1 : -1)} textAnchor="middle" shapeRendering="auto">Count</text>
      <rect x={p.legendX} y={p.legendY} width={p.legendW} height={p.legendH} fill="#fff" stroke="#000" />
      <rect x={p.legendX + 3} y={p.legendY + 3} width={31} height={p.legendH - 6} fill={p.fill} stroke="#333" />
      <text x={p.legendX + 37} y={p.legendY + p.legendH - 5} fontSize={14} shapeRendering="auto">{p.name}</text>
    </svg>
  );
}

function VTab({ cls, text, red, children }: { cls: string; text: string; red?: boolean; children: ReactNode }) {
  return (
    <div className={`flex w-[18px] shrink-0 items-start justify-center overflow-hidden bg-[#f0f1f1] pt-[3px] ${cls}`}>
      <span className={`whitespace-nowrap text-[11px] leading-none [writing-mode:vertical-rl] ${text} ${red ? 'text-[#f01010]' : 'text-[#6e6e6e]'}`}>{children}</span>
    </div>
  );
}

function VBtn({ i, a, sel, left }: { i: string; a?: boolean; sel?: boolean; left?: boolean }) {
  return (
    <div className={`relative flex h-[22px] w-full shrink-0 items-center ${left ? 'justify-start pl-[1px]' : 'justify-center'}`}>
      <div className={`flex h-[22px] w-[22px] items-center justify-center ${sel ? 'border border-[#1f7ad8] bg-[#d8e9f8]' : ''}`}>
        <Icon i={i} size={19} />
      </div>
      {a && <span className="absolute right-[5px] top-[9px] h-0 w-0 border-x-[3px] border-t-[4px] border-x-transparent border-t-black" />}
    </div>
  );
}

function VSep() {
  return <div className="my-[3px] h-[2px] w-[20px] shrink-0 self-center bg-[#c4c6d2]" />;
}

function VGrip({ left }: { left?: boolean }) {
  return <div className={`h-[4px] w-[20px] shrink-0 border-t-2 border-dotted border-[#a8aabb] ${left ? 'ml-[3px]' : 'mx-auto'}`} />;
}

function Kana({ children }: { children: ReactNode }) {
  return <span className="text-[11px] tracking-[-2.7px]">{children}</span>;
}

export default function App() {
  return (
    <div className={`flex h-[890px] w-[1256px] flex-col overflow-hidden border-x-2 border-t border-[#8f8f8f] bg-[#eaedfb] ${cjk} text-[12px] text-black`}>
      {/* caption */}
      <div className="flex h-[31px] shrink-0 items-center bg-white pl-[7px] text-[#222]">
        <svg width="21" height="21" viewBox="0 0 21 21" className="shrink-0">
          <circle cx="10" cy="12" r="8" fill="#e89468" stroke="#9c5a34" />
          <circle cx="10" cy="12" r="5" fill="#fbe6d8" stroke="#9c5a34" />
          <path d="M10 14l3-6" stroke="#803010" />
          <path d="M11 1h9v9h-9z" fill="#bcd2ec" stroke="#5070a0" />
        </svg>
        <span className="ml-[1px] whitespace-nowrap text-[12px] tracking-[-0.5px]">
          template_theme_format.opju - C:¥Users¥tsukihashi¥Downloads¥template_theme_format¥ - /<Kana>フォーマット</Kana>&nbsp;/ - OriginPro 2024 (<Kana>ホームユース</Kana>&nbsp;)
        </span>
        <div className="ml-auto flex h-full items-center">
          <span className="mr-[34px] h-[1px] w-[10px] bg-black" />
          <span className="mr-[35px] h-[10px] w-[10px] border border-black" />
          <svg width="11" height="11" viewBox="0 0 11 11" className="mr-[18px]"><path d="M.5.5l10 10M10.500.5l-10 10" stroke="#000" /></svg>
        </div>
      </div>

      {/* menu */}
      <div className="flex h-[24px] shrink-0 items-center bg-[#eaedfb] pl-[5px]">
        <div className="mr-[9px] h-[15px] w-[2px] border-l-2 border-dotted border-[#a0a2b2]" />
        <MenuItem t="ファイル" k="F" cls="w-[67px] tracking-[-1.4px]" />
        <MenuItem t="編集" k="E" cls="w-[55px]" />
        <MenuItem t="表示" k="V" cls="w-[56px] tracking-[0.2px]" />
        <MenuItem t="グラフ操作" k="G" cls="w-[84px] tracking-[-1px]" />
        <MenuItem t="フォーマット" k="O" cls="w-[89px] tracking-[-1.7px]" />
        <MenuItem t="挿入" k="I" cls="w-[51px] tracking-[0.2px]" />
        <MenuItem t="データ" k="D" cls="w-[63px] tracking-[-0.6px]" />
        <MenuItem t="解析" k="A" cls="w-[57px] tracking-[0.4px]" />
        <MenuItem t="ガジェット" k="S" cls="w-[75px] tracking-[-2px]" />
        <MenuItem t="ツール" k="T" cls="w-[61px] tracking-[-0.8px]" />
        <MenuItem t="環境設定" k="R" cls="w-[82px] tracking-[0.2px]" />
        <MenuItem t="接続" k="N" cls="w-[57px] tracking-[0.3px]" />
        <MenuItem t="ウィンドウ" k="W" cls="w-[81px] tracking-[-1.4px]" />
        <MenuItem t="ヘルプ" k="H" cls="w-[60px] tracking-[-0.6px]" />
      </div>

      {/* toolbar row 1 */}
      <div className="flex h-[26px] shrink-0 pl-[2px]">
        <Seg cls="w-[807px]">
          <Grip />
          <B i="doc" /><B i="folderDoc" /><B i="wkbk" /><B i="graphDoc" /><B i="yellowGrid" /><B i="plot3d" a />
          <B i="layoutDoc" /><B i="noteDoc" /><B i="xyDoc" /><B i="tulipDoc" /><Sep />
          <B i="openFolder" /><B i="cloud" /><B i="save" /><B i="saveGraph" /><Sep />
          <B i="runner" /><B i="runnerStop" />
          <div className="ml-[12px] flex h-[20px] w-[56px] shrink-0 items-center justify-between bg-white pl-[2px] pr-[5px]">
            <span className="text-[12px] font-['Liberation_Sans',sans-serif]">100%</span>
            <Arrow />
          </div>
          <div className="w-[11px] shrink-0" />
          <B i="printer" /><B i="present" /><B i="magentaBox" /><B i="pen" /><B i="bars" /><B i="redWave" /><Sep />
          <B i="tree" /><Sep />
          <B i="findFolder" cls="ml-[2px]" /><B i="findGraph" /><B i="table" /><B i="noteEdit" /><B i="cmd" /><B i="gear" /><Sep />
          <B i="addCol" />
        </Seg>
        <Seg cls="ml-[1px] w-[267px]">
          <Grip />
          <B i="sigmaList" /><B i="sigmaGrid" cls="ml-[2px]" /><B i="sortAZ" /><Sep />
          <B i="num123" cls="-ml-[3px]" /><Sep />
          <B i="stair" cls="ml-[6px]" /><B i="column" /><B i="wave" /><Sep />
          <B i="filter" /><B i="filterX" /><B i="filterUp" />
        </Seg>
        <Seg cls="w-[95px]">
          <Grip />
          <B i="peak" cls="ml-[2px]" /><Sep /><B i="cross" cls="ml-[2px]" /><Sep />
        </Seg>
        <Seg cls="ml-[1px] w-[39px]" more><Grip /></Seg>
        <Seg cls="ml-[1px] w-[39px]" more><Grip /></Seg>
      </div>

      {/* toolbar row 2 */}
      <div className="flex h-[26px] shrink-0 pl-[2px]">
        <Seg cls="w-[222px]">
          <Grip />
          <B i="folderBack" /><B i="fwd" /><B i="folderDown" /><Sep />
          <B i="winAdd" /><B i="folderAdd" /><Sep />
          <B i="sync" cls="ml-[2px]" /><B i="pin" /><Sep />
          <B i="undo" />
        </Seg>
        <Seg cls="ml-[2px] w-[244px]">
          <Grip />
          <B i="wand" /><B i="num123red" /><Sep />
          <B i="excel" /><B i="gridDim" /><B i="gridDim2" cls="ml-[1px]" /><Sep />
          <B i="pages" cls="ml-[1px]" /><Sep />
          <B i="dataIn" cls="ml-[1px]" /><B i="round" /><B i="copies" />
        </Seg>
        <Seg cls="ml-[1px] w-[87px]">
          <Grip />
          <B i="scissors" /><B i="copy" /><B i="paste" />
        </Seg>
        <Seg cls="ml-[2px] w-[509px]">
          <Grip />
          <Combo cls="ml-[2px] w-[126px]">
            <Icon i="ttFont" size={17} />
            <span className="ml-[4px] mr-auto whitespace-nowrap text-[11px] tracking-[-0.4px] text-[#8a8a8a]">デフォルト : ＭＳ</span>
          </Combo>
          <Combo cls="ml-[5px] w-[57px]">
            <span className="text-[12px] text-[#9a9a9a] font-['Liberation_Sans',sans-serif]">0</span>
          </Combo>
          <div className="ml-[3px] flex items-center font-['Liberation_Serif',serif] text-[13px] font-bold text-[#6c6f7e]">
            <span className="w-[22px] text-center text-[15px]">B</span>
            <span className="w-[22px] text-center text-[15px] italic">I</span>
            <span className="w-[22px] text-center text-[15px] underline">U</span>
            <span className="w-[22px] text-center">x<sup className="text-[8px]">2</sup></span>
            <span className="w-[22px] text-center">x<sub className="text-[8px]">2</sub></span>
            <span className="w-[22px] text-center">x<sup className="text-[8px]">2</sup></span>
            <span className="w-[22px] text-center">αβ</span>
            <span className="w-[22px] text-center text-[20px] font-normal leading-[20px] font-['Liberation_Sans',sans-serif]">A</span>
            <span className="w-[22px] text-center font-normal">A</span>
          </div>
          <B i="alignLeft" a /><B i="colBars" a cls="-ml-[3px]" />
          <div className="w-[2px]" />
          <B i="fontColor" a dim />
        </Seg>
        <Seg cls="ml-[2px] w-[181px]" more>
          <Grip />
          <B i="bucket" a dim w="w-[35px]" cls="ml-[1px]" /><B i="palette" a dim w="w-[35px]" /><B i="pencilLine" a dim w="w-[34px]" /><B i="bulb" /><B i="hatch" a dim />
        </Seg>
      </div>

      {/* workspace */}
      <div className="flex min-h-0 flex-1">
        {/* left dock */}
        <div className="flex w-[21px] shrink-0 flex-col pt-[4px]">
          <VTab cls="h-[150px]" text="tracking-[-2.4px]">プロジェクト・エクスプローラ (8)</VTab>
          <VTab cls="mt-[15px] h-[118px]" text="tracking-[0px]" red>メッセージログ (8)</VTab>
          <VTab cls="mt-[15px] h-[117px]" text="tracking-[-1px]">スマートヒントログ</VTab>
        </div>
        <div className="flex w-[36px] shrink-0 flex-col">
          <div className="flex h-[440px] shrink-0 flex-col rounded-b-[3px] bg-gradient-to-r from-[#f7f8fd] via-[#e2e3ef] to-[#a9abc3]">
            <VGrip left />
            <div className="h-[6px]" />
            <VBtn left i="arrowSel" sel /><VBtn left i="zoomIn" /><VBtn left i="zoomOut" /><VBtn left i="crosshair" /><VBtn left i="target" a />
            <VBtn left i="pickY" /><VBtn left i="peakPick" a /><VBtn left i="fitPick" a /><VBtn left i="dots" /><VBtn left i="textT" />
            <VBtn left i="rotText" a /><VBtn left i="arrowLine" a /><VBtn left i="line" a /><VBtn left i="ellipse" a /><VBtn left i="hand" />
            <VBtn left i="sqrt" a /><VBtn left i="chartDoc" a /><VBtn left i="handAxis" /><VBtn left i="box3d" />
            <SideMore />
          </div>
          <div className="mt-[2px] flex h-[242px] shrink-0 flex-col rounded-b-[3px] bg-gradient-to-r from-[#f7f8fd] via-[#e2e3ef] to-[#a9abc3]">
            <VGrip left />
            <div className="h-[4px]" />
            <div className="flex h-[22px] w-[24px] flex-col items-center justify-center pl-[1px]">
              <span className="h-[4px] w-[16px] bg-[#e01010]" />
              <span className="h-[4px] w-[16px] bg-[#ffe800]" />
              <span className="h-[4px] w-[16px] bg-[#1010e0]" />
              <span className="h-[3px] w-[16px] bg-[#0a3c1e]" />
            </div>
            <VBtn left i="circles" /><VBtn left i="boxPlot" /><VBtn left i="bcLegend" /><VBtn left i="asterisk" a />
            <VBtn left i="ruler" /><VBtn left i="clockStamp" /><VBtn left i="folderStamp" /><VBtn left i="plainGrid" /><VBtn left i="sqrt" />
            <SideMore />
          </div>
        </div>

        {/* center column */}
        <div className="flex min-w-0 flex-1 flex-col">
          <div className="relative min-h-0 flex-1 border-l border-t border-[#5e5e5e] bg-[#a9a9a9]">
            <Graph
              title="Graph5"
              active
              cls="left-[22px] top-[11px] h-[437px] w-[530px] border-2 border-[#b0087f] bg-[linear-gradient(#94b2d4,#b9d0ea_32px,#b7cfeb)] pb-[8px] pl-[7px] pr-[7px]"
              extra="relative border-r border-r-white"
              page={
                <div className="relative h-full">
                  <PageTag />
                  <Chart
                    w={510} h={390} x0={74} x1={458} yTop={45} yBot={331} yMax={18} yStep={2} xMin={-0.1}
                    bars={[1, 4, 11, 16, 14, 4]} fill="#80ccff" font="Liberation Serif, serif" tick={12} label={16}
                    name="data2" legendX={390} legendY={14} legendW={72} legendH={21} yLabelX={48} xLabelY={372} minus
                  />
                  <svg width="16" height="20" viewBox="0 0 16 20" className="absolute left-[98px] top-[17px]">
                    <path d="M.5.5L12 12" stroke="#000" />
                    <path d="M2 16l4-3 4 4-2 2" fill="none" stroke="#999" strokeDasharray="1 1" />
                  </svg>
                  <div className="absolute bottom-0 left-0 right-0 h-[5px] bg-[#c0c0c0]" />
                </div>
              }
            />
            <Graph
              title="Graph6"
              cls="left-[552px] top-[11px] h-[437px] w-[543px] border border-[#5a5a5a] bg-[linear-gradient(#ccdcee,#dbe7f4_32px,#d4e2f1)] pb-[9px] pl-[8px] pr-[8px]"
              extra="relative"
              page={
                <div className="relative h-full">
                  <PageTag />
                  <Chart
                    w={515} h={392} x0={76} x1={465} yTop={46} yBot={336} yMax={16} yStep={2} xMin={0}
                    bars={[3, 12, 13, 14, 7, 0, 1]} fill="#fac896" font="Liberation Sans, sans-serif" tick={10} label={12}
                    name="data1" legendX={395} legendY={15} legendW={71} legendH={18} yLabelX={52} xLabelY={370}
                  />
                  <div className="absolute bottom-0 right-0 top-0 w-[10px] bg-[#c0c0c0]" />
                </div>
              }
            />
            <div className="absolute left-[2px] top-[685px] flex h-[27px] w-[158px] items-center rounded-t-[5px] border border-[#5a5a5a] bg-gradient-to-b from-[#cbd9e6] to-[#d9e5f0] pl-[4px] pr-[3px]">
              <Icon i="book" size={16} />
              <span className="ml-[3px] whitespace-nowrap text-[11px] text-[#a0a8b0] font-['Liberation_Sans',sans-serif]">Book5 - var...</span>
              <div className="ml-auto flex gap-[2px]">
                <WinMini><path d="M1 4h6v5H1zM4 1h6v5" fill="none" stroke="#444" /></WinMini>
                <WinMini><path d="M2 3h7v5H2z" fill="none" stroke="#444" /></WinMini>
                <WinMini><path d="M2 1l7 8M9 1l-7 8" stroke="#444" strokeWidth="1.800" /></WinMini>
              </div>
            </div>
            <span className="absolute left-[1024px] top-[687px] text-[13px] tracking-[-0.4px] text-[#0a6ad8] underline">&gt;&gt;フィード</span>
          </div>

          {/* bottom toolbars */}
          <div className="flex h-[28px] shrink-0 pb-[1px]">
            <Seg cls="w-[323px]">
              <Grip />
              <div className="w-[2px]" />
              <B i="lineB" a w="w-[31px]" /><B i="scatter" a w="w-[31px]" /><B i="lineSym" a w="w-[31px]" /><B i="redCols" a w="w-[31px]" /><B i="bluePlot" a w="w-[31px]" />
              <B i="redBox" a w="w-[31px]" /><B i="area" a w="w-[31px]" /><B i="polarR" a w="w-[31px]" /><B i="candle" a w="w-[31px]" /><B i="cubeDim" />
            </Seg>
            <Seg cls="w-[207px]">
              <Grip />
              <B i="wall3d" a w="w-[31px]" /><Sep />
              <B i="block3d" a w="w-[31px]" cls="ml-[2px]" /><B i="dice" a w="w-[31px]" /><B i="dotted" a w="w-[31px]" /><B i="waveGrid" a w="w-[31px]" /><B i="imgBox" />
            </Seg>
            <div className="w-[119px] shrink-0" />
            <Seg cls="w-[168px]">
              <Grip />
              <div className="w-[2px]" />
              <B i="mask" /><B i="maskX" /><Sep />
              <B i="maskPlain" /><B i="ptsV" /><B i="ptsRed" /><Sep />
              <B i="ptsRed" />
            </Seg>
            <Seg cls="w-[328px]">
              <Grip />
              <div className="w-[5px]" />
              <B i="moveDn" /><B i="moveUp" /><B i="moveL" /><B i="moveR" /><B i="trap" /><B i="trapDn" /><B i="trapOut" /><B i="cubes" /><B i="fourArrows" /><B i="pinCube" /><B i="cubeLine" />
              <Combo cls="ml-[2px] w-[58px]">
                <span className="text-[12px] text-[#9a9a9a] font-['Liberation_Sans',sans-serif]">10</span>
              </Combo>
            </Seg>
          </div>
        </div>

        {/* right dock */}
        <div className="flex w-[28px] shrink-0 flex-col bg-[#eaedfb] pl-[1px] pr-[2px]">
          <div className="flex h-[390px] shrink-0 flex-col bg-gradient-to-r from-[#f7f8fd] via-[#e2e3ef] to-[#a9abc3]">
            <VGrip />
            <div className="h-[5px]" />
            <VBtn i="checker" /><VBtn i="xyzRed" /><VBtn i="xyRed" /><VBtn i="yxRed" /><VBtn i="swapXY" /><VBtn i="runAxis" sel />
            <VSep />
            <VBtn i="layerBig" /><VBtn i="layerTop" /><VBtn i="layerBot" /><VBtn i="redWave" />
            <VSep />
            <VBtn i="axisB" /><VBtn i="axisT" /><VBtn i="axisR" /><VBtn i="axisBox" /><VBtn i="axisBreak" /><VBtn i="axisRed" />
            <SideMore />
          </div>
          <div className="mt-[3px] flex min-h-0 flex-1 flex-col bg-gradient-to-r from-[#f7f8fd] via-[#e2e3ef] to-[#a9abc3]">
            <VGrip />
            <div className="h-[3px]" />
            <VBtn i="alnL" /><VBtn i="alnR" /><VSep /><VBtn i="alnT" /><VBtn i="alnB" /><VSep />
            <VBtn i="ctrH" /><VBtn i="ctrV" /><VSep /><VBtn i="sameW" /><VBtn i="sameH" /><VSep />
            <VBtn i="dist" /><VBtn i="distV" /><VBtn i="overlap" /><VBtn i="overlap2" /><VSep />
            <VBtn i="selBox" /><VSep />
            <SideMore />
          </div>
        </div>
        <div className="flex w-[20px] shrink-0 flex-col pl-[1px] pt-[4px]">
          <VTab cls="h-[58px]" text="tracking-[0px]">アプリ</VTab>
          <VTab cls="mt-[15px] h-[142px]" text="tracking-[-0.6px]">オブジェクトマネージャ</VTab>
        </div>
      </div>

      {/* status bar */}
      <div className="relative flex h-[22px] shrink-0 items-center border-y border-b-[#8f8f8f] border-t-[#d8d8d8] bg-[#f0f0f0] text-[12px]">
        <span className="ml-[38px] w-[696px] whitespace-nowrap text-[#222] tracking-[-1.1px]">&lt;&lt; スタートメニュー (F1)</span>
        <span className="flex h-full w-[20px] items-center justify-center border-l border-[#d0d0d0] text-[11px]">--</span>
        <span className="h-full w-[10px] border-l border-[#d0d0d0]" />
        <span className="flex h-full w-[52px] items-center justify-center border-l border-[#d0d0d0] whitespace-nowrap font-['Liberation_Sans',sans-serif]">AU : ON</span>
        <span className="flex h-full w-[67px] items-center justify-center border-l border-[#d0d0d0] whitespace-nowrap font-['Liberation_Sans',sans-serif]">Light Grids</span>
        <span className="flex h-full w-[198px] items-center justify-center border-l border-[#d0d0d0] whitespace-nowrap font-['Liberation_Sans',sans-serif] text-[11.700px]">1:[Book5]vartest2!Col("data2")[1:50]</span>
        <span className="flex h-full w-[102px] items-center justify-center border-l border-[#d0d0d0] whitespace-nowrap font-['Liberation_Sans',sans-serif]">15KB - [Graph5]1!</span>
        <span className="flex h-full w-[51px] items-center justify-center border-l border-[#d0d0d0] whitespace-nowrap tracking-[-0.5px]">ラジアン</span>
        <span className="flex h-full flex-1 items-end justify-end border-l border-[#d0d0d0] pb-[2px] pr-[1px]">
          <svg width="11" height="11" viewBox="0 0 11 11"><path d="M8 1h2v2H8zM4 5h2v2H4zM8 5h2v2H8zM0 9h2v2H0zM4 9h2v2H4zM8 9h2v2H8z" fill="#bcbcbc" /></svg>
        </span>
        {/* start menu badge hangs over the toolbar above */}
        <svg width="36" height="36" viewBox="0 0 36 36" className="absolute -top-[14px] left-[1px]">
          <circle cx="12" cy="26" r="11" fill="#e8a080" />
          <circle cx="16" cy="17" r="11" fill="#b8c8dc" stroke="#2a7ad0" strokeWidth="2.500" />
          <path d="M11 19l3-5 3 4 3-3" fill="none" stroke="#7a8a9c" strokeWidth="2" />
          <path d="M25 25l6 6" stroke="#1f66b8" strokeWidth="3.500" />
        </svg>
      </div>
    </div>
  );
}

function WinMini({ children }: { children: ReactNode }) {
  return (
    <span className="flex h-[17px] w-[18px] items-center justify-center rounded-[2px] border border-[#7f8a98]">
      <svg width="11" height="10" viewBox="0 0 11 10" shapeRendering="crispEdges">{children}</svg>
    </span>
  );
}
